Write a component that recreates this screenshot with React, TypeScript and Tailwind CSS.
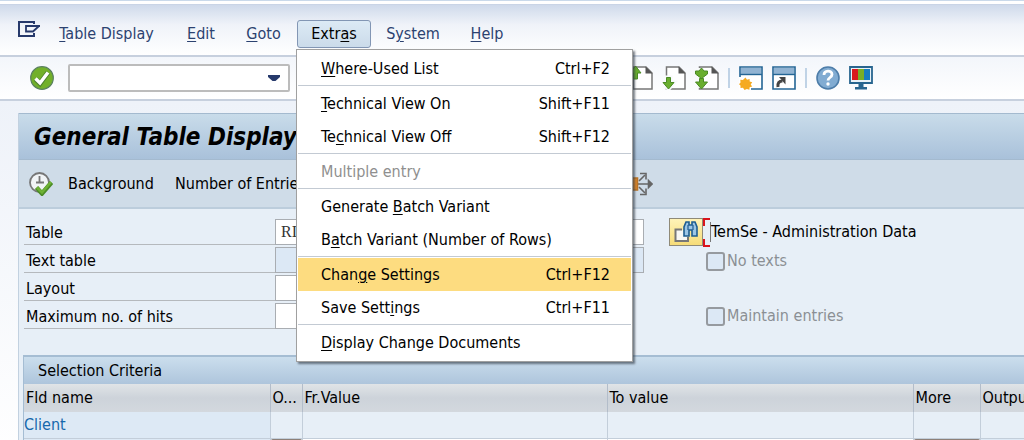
import type { ReactNode } from "react";

type MenuEntry = {
  before?: string;
  hotkey: string;
  after: string;
  shortcut?: string;
  disabled?: boolean;
  active?: boolean;
};

const extrasMenu: MenuEntry[][] = [
  [{ hotkey: "W", after: "here-Used List", shortcut: "Ctrl+F2" }],
  [
    { hotkey: "T", after: "echnical View On", shortcut: "Shift+F11" },
    { before: "Te", hotkey: "c", after: "hnical View Off", shortcut: "Shift+F12" },
  ],
  [{ hotkey: "", after: "Multiple entry", disabled: true }],
  [
    { before: "Generate ", hotkey: "B", after: "atch Variant" },
    { before: "B", hotkey: "a", after: "tch Variant (Number of Rows)" },
  ],
  [
    { before: "Chan", hotkey: "g", after: "e Settings", shortcut: "Ctrl+F12", active: true },
    { before: "Save Sett", hotkey: "i", after: "ngs", shortcut: "Ctrl+F11" },
  ],
  [{ hotkey: "D", after: "isplay Change Documents" }],
];

function Label({ before = "", hotkey, after }: { before?: string; hotkey: string; after: string }) {
  return (
    <span className="whitespace-nowrap">
      {before}
      {hotkey && <u className="underline decoration-1 underline-offset-2">{hotkey}</u>}
      {after}
    </span>
  );
}

function MenuButton({ width, children }: { width: string; children: ReactNode }) {
  return (
    <button type="button" className={`h-7 shrink-0 text-center text-[#2c4270] ${width}`}>
      {children}
    </button>
  );
}

function ExtrasDropdown() {
  return (
    <div
      role="menu"
      className="absolute -left-px top-[29px] z-10 w-[337px] border border-[#a0a0a0] bg-white px-px py-0.5 shadow-[2px_2px_2px_rgba(50,60,70,0.65)]"
    >
      {extrasMenu.map((group, i) => (
        <div key={i} className={i > 0 ? "border-t border-[#c3cad3] pt-px" : ""}>
          {group.map((entry) => (
            <button
              key={entry.after}
              type="button"
              role="menuitem"
              disabled={entry.disabled}
              className={`flex h-[33px] w-full items-center justify-between pl-[23px] pr-[21px] ${
                entry.active ? "bg-[#fddc80]" : ""
              } ${entry.disabled ? "text-[#8f8f8f]" : "text-black"}`}
            >
              <Label before={entry.before} hotkey={entry.hotkey} after={entry.after} />
              {entry.shortcut && <span>{entry.shortcut}</span>}
            </button>
          ))}
        </div>
      ))}
    </div>
  );
}

function MenuBar() {
  return (
    <nav className="flex h-[51px] items-start border-t border-[#c9d4e6] bg-linear-to-b from-[#cfdaeb] via-[#f0f3f9] via-40% to-white pt-[15px]">
      <button type="button" aria-label="Window menu" className="ml-[17px] w-6">
        <svg width="24" height="19" viewBox="0 0 24 19" fill="none" stroke="#26396b" strokeWidth="2">
          <path d="M17 4V2H2v14h15v-3" />
          <path d="M23 6H9v5.500h7L22 6" strokeWidth="1.800" />
        </svg>
      </button>
      <MenuButton width="w-[131px]">
        <Label hotkey="T" after="able Display" />
      </MenuButton>
      <MenuButton width="w-[58px]">
        <Label hotkey="E" after="dit" />
      </MenuButton>
      <MenuButton width="w-[67px]">
        <Label hotkey="G" after="oto" />
      </MenuButton>
      <div className="relative w-[74px] shrink-0">
        <button
          type="button"
          aria-expanded="true"
          className="h-7 w-full rounded-[3px] border border-[#8296b4] bg-linear-to-b from-[#dceaf5] to-[#cbdbea] text-black"
        >
          <Label before="Extr" hotkey="a" after="s" />
        </button>
        <ExtrasDropdown />
      </div>
      <MenuButton width="w-[84px]">
        <Label before="S" hotkey="y" after="stem" />
      </MenuButton>
      <MenuButton width="w-[64px]">
        <Label hotkey="H" after="elp" />
      </MenuButton>
    </nav>
  );
}

const greenArrowDown = "M4.500 11.500h4v5h3.500L6.500 23 1 16.500h3.500z";

function PageIcon({ children }: { children: ReactNode }) {
  return (
    <svg width="24" height="24" viewBox="0 0 24 24">
      <path d="M4.500 1h12.500l6 6v16H4.500z" fill="#fff" stroke="#777" strokeWidth="1.500" />
      <path d="M16.500 0.500v7H23.500z" fill="#555" />
      {children}
    </svg>
  );
}

function WindowIcon({ children }: { children: ReactNode }) {
  return (
    <svg width="24" height="24" viewBox="0 0 24 24">
      <path d="M1 1h22v22H1z" fill="#fff" stroke="#246595" strokeWidth="1.600" />
      <path d="M2 2h20v6H2z" fill="#91b3d2" />
      <path d="M1 8.500h22" stroke="#246595" strokeWidth="1.400" />
      {children}
    </svg>
  );
}

function IconButton({ label, children }: { label: string; children: ReactNode }) {
  return (
    <button type="button" aria-label={label} className="size-6 shrink-0">
      {children}
    </button>
  );
}

function Divider() {
  return <span className="h-5 w-0.5 shrink-0 bg-[#c0d3e6]" />;
}

function SystemToolbar() {
  return (
    <div className="flex h-[46px] items-center border-y-2 border-[#c7d0de] bg-linear-to-b from-[#f3f6fb] to-white pl-[30px]">
      <IconButton label="Enter">
        <svg width="24" height="24" viewBox="0 0 24 24">
          <circle cx="12" cy="12" r="11.300" fill="#72b02a" stroke="#5a8060" strokeWidth="1.200" />
          <path d="m5.500 13 4.500 4.500L18 6.500" fill="none" stroke="#4d8030" strokeWidth="5" />
          <path d="m5.500 12.500 4.500 4.500L18 6.500" fill="none" stroke="#fff" strokeWidth="3.400" />
        </svg>
      </IconButton>
      <div className="ml-3.5 flex h-7 w-[222px] shrink-0 rounded-[2px] border-2 border-[#bcbcbc] bg-white">
        <input aria-label="Command" className="min-w-0 flex-1 px-1 outline-none" />
        <button type="button" aria-label="Command history" className="flex w-7 items-center pl-2">
          <svg width="12" height="8" viewBox="0 0 12 8">
            <path d="M0 1h12v2L7.500 7h-3L0 3z" fill="#26396b" />
          </svg>
        </button>
      </div>
      <div className="ml-[339px] flex items-center gap-[9px]">
        <IconButton label="Previous page">
          <PageIcon>
            <path d="M4.500 13h4V7h3.500L6.500 0 1 7h3.500z" fill="#69ae2e" stroke="#4b8a25" />
          </PageIcon>
        </IconButton>
        <IconButton label="Next page">
          <PageIcon>
            <path d={greenArrowDown} fill="none" stroke="#f8fafc" strokeWidth="4" />
            <path d={greenArrowDown} fill="#69ae2e" stroke="#4b8a25" />
          </PageIcon>
        </IconButton>
        <IconButton label="Last page">
          <PageIcon>
            <path d="M2 2h7v20H2z" fill="#f8fafc" />
            <path
              d="M6.500 2 9 5h3.500v3L6.500 12.500.5 8V5H4zM4.500 12.500h4V16h4L6.500 23l-6-7h4z"
              fill="#69ae2e"
              stroke="#4b8a25"
            />
          </PageIcon>
        </IconButton>
        <Divider />
        <IconButton label="New session">
          <WindowIcon>
            <path d="M0 11h12v13H0z" fill="#fff" />
            <path
              d="m6.500 11.500 1.500 2.200 2.600-.7.1 2.600 2.500.7-1.500 2.100 1.500 2.200-2.600.6-.2 2.600-2.500-.8L5.500 24l-1.500-2.300-2.500.4v-2.500L0 18.300l1.500-1.900-.2-2.700 2.600.3z"
              fill="#f5aa20"
            />
          </WindowIcon>
        </IconButton>
        <IconButton label="Create shortcut">
          <WindowIcon>
            <path d="M6 21c-.5-4 1-6 4.500-6" fill="none" stroke="#444" strokeWidth="3" />
            <path d="M7 11h6.500v7.500z" fill="#444" />
          </WindowIcon>
        </IconButton>
        <Divider />
        <IconButton label="Help">
          <svg width="24" height="24" viewBox="0 0 24 24" fill="none">
            <circle cx="12" cy="12" r="11" fill="#82acd2" stroke="#4d7da9" strokeWidth="1.600" />
            <path d="M8 9c0-5 8-5 8-.5 0 3-4 3-4 6" stroke="#fff" strokeWidth="2.800" />
            <circle cx="12" cy="18" r="1.700" fill="#fff" />
          </svg>
        </IconButton>
        <IconButton label="Customize local layout">
          <svg width="24" height="24" viewBox="0 0 24 24">
            <path d="M1 1h22v16H1z" fill="#e9f2f8" stroke="#28658f" strokeWidth="1.800" />
            <path d="M3 3h6v11H3z" fill="#d9191d" />
            <path d="M9 3h6v11H9z" fill="#78ae27" />
            <path d="M15 3h6v11h-6z" fill="#167cc1" />
            <path d="M9.500 18h5v3H18v2.500H6V21h3.500z" fill="#28658f" />
          </svg>
        </IconButton>
      </div>
    </div>
  );
}

function ApplicationToolbar() {
  return (
    <div className="flex h-[49px] items-center border-b-2 border-[#bccddc] bg-[#cfdce8]">
      <div className="flex w-[608px] shrink-0 items-center">
        <button type="button" aria-label="Execute" className="ml-[10px] size-6">
          <svg width="24" height="24" viewBox="0 0 24 24" fill="none">
            <circle cx="10.500" cy="10.500" r="9.500" fill="#f1f4f6" stroke="#777" strokeWidth="1.800" />
            <path d="M10.500 4v7.500M7 10.500h8" stroke="#777" strokeWidth="1.800" />
            <path d="m7.500 15.500 5.500 6 9.500-11" stroke="#4c8c27" strokeWidth="4.500" />
            <path d="m8 15.500 5 5 9-10.500" stroke="#6fb235" strokeWidth="2.500" />
          </svg>
        </button>
        <button type="button" className="ml-[15px] w-[86px] text-left">
          Background
        </button>
        <button type="button" className="ml-[21px] whitespace-nowrap">
          Number of Entries
        </button>
      </div>
      <button type="button" aria-label="All selections" className="h-6 w-[26px]">
        <svg width="26" height="24" viewBox="0 0 26 24" fill="none" stroke="#666" strokeWidth="1.600">
          <path d="M10 12h12M12 9l6-6M12 15l6 6" />
          <path d="M13 1.500h6v6M13 22.500h6v-6" />
          <path d="m21.500 8.500 3.500 3.500-3.500 3.500z" fill="#666" />
          <path d="M1 6h9.500v12H1z" fill="#e28a2b" stroke="#bb7427" />
        </svg>
      </button>
    </div>
  );
}

type Field = {
  id: string;
  label: string;
  value?: string;
  readOnly?: boolean;
  short?: boolean;
};

const fields: Field[] = [
  { id: "table", label: "Table", value: "RI" },
  { id: "text-table", label: "Text table", readOnly: true },
  { id: "layout", label: "Layout", short: true },
  { id: "max-hits", label: "Maximum no. of hits", short: true },
];

function FieldRow({ field }: { field: Field }) {
  return (
    <div className="flex h-7 items-end">
      <label
        htmlFor={field.id}
        className="flex h-7 w-[251px] shrink-0 items-center border-b border-[#b5b9bd] pl-0.5 pt-1"
      >
        {field.label}
      </label>
      <input
        id={field.id}
        defaultValue={field.value}
        readOnly={field.readOnly}
        className={`h-[26px] border border-[#a9adb2] px-[5px] font-['Liberation_Serif','Times_New_Roman',serif] text-[#333] outline-none ${
          field.readOnly ? "bg-[#dce8f5]" : "bg-white"
        } ${field.short ? "w-[140px]" : "w-[369px]"}`}
      />
    </div>
  );
}

function CheckField({ id, label }: { id: string; label: string }) {
  return (
    <div className="ml-[37px] flex h-7 items-center gap-0.5 text-[#8b8f94]">
      <input
        id={id}
        type="checkbox"
        disabled
        className="size-[19px] appearance-none rounded-[3px] border-2 border-[#969a9f] bg-[#dce8f5]"
      />
      <label htmlFor={id}>{label}</label>
    </div>
  );
}

function SelectionForm() {
  return (
    <div className="flex pl-[5px] pt-2">
      <div className="shrink-0">
        {fields.map((field) => (
          <FieldRow key={field.id} field={field} />
        ))}
      </div>
      <div className="ml-[25px]">
        <div className="flex h-[30px] items-center">
          <button
            type="button"
            aria-label="Find table"
            className="h-7 w-[34px] border border-[#8f8a78] bg-linear-to-b from-[#fff3b8] to-[#f6dc78] pl-1"
          >
            <svg width="26" height="24" viewBox="0 0 26 24" fill="none">
              <path d="M8 9.500H1.500V21H14v-4" fill="#f7f7f4" stroke="#777" strokeWidth="2" />
              <path
                d="M10 16V7l2-5h3v3h3V2h3l2 5v9h-5v-6h-3v6z"
                fill="#9cc5e5"
                stroke="#1e5d91"
                strokeWidth="1.600"
              />
              <path d="M14 5v5M19 5v5" stroke="#1e5d91" strokeWidth="1.200" />
            </svg>
          </button>
          <span className="flex h-[29px] w-[7px] flex-col justify-between">
            <span className="h-2 border-l-2 border-t-2 border-[#d9141c]" />
            <span className="h-2 border-b-2 border-l-2 border-[#d9141c]" />
          </span>
          <span className="whitespace-nowrap border-l border-[#777]">TemSe - Administration Data</span>
        </div>
        <CheckField id="no-texts" label="No texts" />
        <div className="h-[27px]" />
        <CheckField id="maintain" label="Maintain entries" />
      </div>
    </div>
  );
}

const columns = [
  { title: "Fld name", width: "w-[246px]" },
  { title: "O...", width: "w-8" },
  { title: "Fr.Value", width: "w-[305px]" },
  { title: "To value", width: "w-[306px]" },
  { title: "More", width: "w-[67px]" },
  { title: "Output", width: "" },
];

function SelectionCriteria() {
  return (
    <section className="ml-1 mt-[25px] border-l border-t-2 border-[#a5bdd3]">
      <h2 className="flex h-[27px] items-center bg-linear-to-b from-[#cbdeed] to-[#aec5dc] pl-3.5">
        Selection Criteria
      </h2>
      <table className="w-full table-fixed border-collapse">
        <thead>
          <tr className="h-7 bg-linear-to-b from-[#e0e4e7] via-[#cdd3da] to-[#d3d8de]">
            {columns.map((column) => (
              <th
                key={column.title}
                scope="col"
                className={`overflow-hidden whitespace-nowrap border-r border-[#b3bdca] p-0 pl-0.5 text-left font-normal last:border-r-0 ${column.width}`}
              >
                {column.title}
              </th>
            ))}
          </tr>
        </thead>
        <tbody>
          <tr className="h-[26px] border-b border-[#c3ceda]">
            <td className="border-r border-[#c3ceda] bg-[#dde9f5] p-0 text-[#1768ac]">Client</td>
            <td className="border-r border-[#c3ceda]" />
            <td className="border-r border-[#c3ceda]" />
            <td className="border-r border-[#c3ceda]" />
            <td className="border-r border-[#c3ceda]" />
            <td />
          </tr>
          <tr className="h-[26px]">
            <td className="border-r border-[#c3ceda] bg-[#dde9f5] p-0" />
            <td className="border-r border-[#c3ceda] p-0 align-top">
              <button
                type="button"
                aria-label="Select option"
                className="block h-6 w-full rounded-[2px] border-2 border-[#8d8078] bg-[#f5eedc]"
              />
            </td>
            <td className="border-r border-[#c3ceda] bg-white" />
            <td className="border-r border-[#c3ceda] bg-white" />
            <td className="border-r border-[#c3ceda] p-0 align-top">
              <button
                type="button"
                aria-label="Multiple selection"
                className="block h-6 w-full rounded-[2px] border-2 border-[#8d8078] bg-[#f5eedc]"
              />
            </td>
            <td className="bg-[#dde9f5]" />
          </tr>
        </tbody>
      </table>
    </section>
  );
}

export default function App() {
  return (
    <div className="h-screen overflow-hidden bg-[#f8fafd] font-['DejaVu_Sans_Condensed','DejaVu_Sans',sans-serif] text-base leading-5 text-black">
      <div className="h-1 border-t border-[#c9d9ea] bg-white" />
      <MenuBar />
      <SystemToolbar />
      <div className="bg-linear-to-b from-[#eef2f9] to-white pl-[18px] pt-3">
        <main className="border-l border-[#c2d1e0] bg-[#e7eff7]">
          <h1 className="flex h-[47px] items-center whitespace-nowrap border-y border-[#a4bacf] bg-linear-to-b from-[#c9dcea] to-[#a9c1da] pl-[15px] text-2xl font-bold italic">
            General Table Display
          </h1>
          <ApplicationToolbar />
          <SelectionForm />
          <SelectionCriteria />
        </main>
      </div>
    </div>
  );
}
